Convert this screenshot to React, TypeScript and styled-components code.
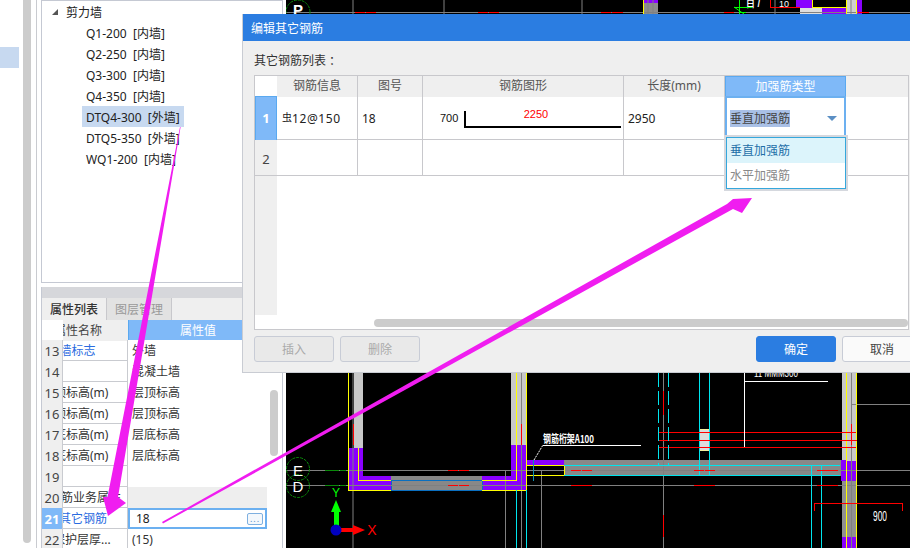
import styled, { createGlobalStyle } from "styled-components"

const GlobalStyle = createGlobalStyle`
  html, body { margin: 0; padding: 0; background: #fff; }
  * { box-sizing: border-box; }
  body { font-family: "Noto Sans", "Noto Sans CJK SC", sans-serif; font-size: 12px; color: #222; }
`

const treeItems = [
  "Q1-200 [内墙]",
  "Q2-250 [内墙]",
  "Q3-300 [内墙]",
  "Q4-350 [内墙]",
  "DTQ4-300 [外墙]",
  "DTQ5-350 [外墙]",
  "WQ1-200 [内墙]",
]

const props = [
  { no: 13, name: "内/外墙标志", value: "外墙", shift: -32, link: true },
  { no: 14, name: "", value: "混凝土墙", shift: 0 },
  { no: 15, name: "起点顶标高(m)", value: "层顶标高", shift: -33 },
  { no: 16, name: "终点顶标高(m)", value: "层顶标高", shift: -33 },
  { no: 17, name: "起点底标高(m)", value: "层底标高", shift: -33 },
  { no: 18, name: "终点底标高(m)", value: "层底标高", shift: -33 },
  { no: 19, name: "", value: "", shift: 0 },
  { no: 20, name: "钢筋业务属性", value: "", shift: -14, group: true },
  { no: 21, name: "其它钢筋", value: "18", shift: -4, link: true, active: true },
  { no: 22, name: "保护层厚...", value: "(15)", shift: -10 },
]

const Page = styled.div`
  position: relative;
  display: flex;
  width: 910px;
  height: 548px;
  overflow: hidden;
  background: #fff;
`

const LeftStrip = styled.div`
  width: 23px;
  padding-top: 47px;
`

const StripMark = styled.div`
  width: 19px;
  height: 21px;
  background: #c7d9f0;
`

const OuterScroll = styled.div`
  width: 8px;
  height: 543px;
  background: #cccccc;
  border-radius: 0 0 4px 4px;
`

const SideColumn = styled.div`
  display: flex;
  flex-direction: column;
  width: 250px;
  margin-left: 5px;
  padding-left: 4px;
  border-left: 1px solid #c9cbd0;
`

const TreePanel = styled.div`
  width: 242px;
  height: 283px;
  border: 1px solid #c5c9d3;
  flex-shrink: 0;
`

const TreeRoot = styled.div`
  display: flex;
  align-items: center;
  height: 21px;
  padding-left: 10px;
  font-size: 12px;
  gap: 8px;
`

const Triangle = styled.span`
  width: 0;
  height: 0;
  border-left: 6px solid transparent;
  border-bottom: 6px solid #555;
`

const TreeItem = styled.div<{ $selected?: boolean }>`
  display: flex;
  align-items: center;
  width: ${p => (p.$selected ? "102px" : "auto")};
  height: 21px;
  margin-left: 40px;
  padding-left: 4px;
  white-space: pre;
  background: ${p => (p.$selected ? "#c7d9f0" : "transparent")};
`

const PropsPanel = styled.div`
  display: flex;
  flex-direction: column;
  flex: 1;
  width: 242px;
  margin-top: 4px;
  border-left: 1px solid #c5c9d3;
  border-right: 1px solid #c5c9d3;
`

const GrayBar = styled.div`
  height: 11px;
  background: #d6d7db;
`

const Tabs = styled.div`
  display: flex;
  height: 22px;
  background: #efefef;
`

const Tab = styled.div<{ $active?: boolean }>`
  display: flex;
  align-items: center;
  justify-content: center;
  width: 65px;
  font-size: 12px;
  font-weight: ${p => (p.$active ? 500 : 400)};
  color: ${p => (p.$active ? "#333" : "#999")};
  background: ${p => (p.$active ? "#efefef" : "#e2e2e2")};
  border-right: 1px solid #c8c8cc;
`

const PropBody = styled.div`
  display: flex;
`

const PropTable = styled.div`
  width: 225px;
`

const PropHeader = styled.div`
  display: grid;
  grid-template-columns: 21px 65px 1fr;
  height: 20px;
`

const PropRow = styled.div`
  display: grid;
  grid-template-columns: 21px 65px 1fr;
  height: 21px;
  border-bottom: 1px solid #c9cbd0;
`

const CornerCell = styled.div`
  background: #fff;
`

const HeaderName = styled.div`
  line-height: 21px;
  text-indent: -9px;
  overflow: hidden;
  white-space: nowrap;
  color: #444;
  background: #efefef;
`

const HeaderValue = styled.div`
  text-align: center;
  line-height: 21px;
  color: #fff;
  background: #7fb9f8;
  border-left: 1px solid #5aa9f0;
`

const IndexCell = styled.div<{ $active?: boolean }>`
  text-align: center;
  line-height: 22px;
  font-size: 13px;
  font-weight: ${p => (p.$active ? 700 : 400)};
  color: ${p => (p.$active ? "#fff" : "#444")};
  background: ${p => (p.$active ? "#7fb9f8" : "#efefef")};
  border-right: 1px solid #c9cbd0;
`

const NameCell = styled.div<{ $link?: boolean; $shift: number }>`
  overflow: hidden;
  white-space: nowrap;
  line-height: 22px;
  text-indent: ${p => p.$shift}px;
  color: ${p => (p.$link ? "#2a6be0" : "#333")};
  border-right: 1px solid #c9cbd0;
`

const ValueCell = styled.div<{ $group?: boolean }>`
  padding-left: 4px;
  line-height: 22px;
  color: #333;
  background: ${p => (p.$group ? "#eeeeee" : "#fff")};
`

const EditCell = styled.div`
  display: flex;
  align-items: center;
  justify-content: space-between;
  height: 21px;
  padding: 0 2px 0 6px;
  border: 2px solid #6cb0f0;
`

const DotsButton = styled.div`
  display: flex;
  align-items: center;
  justify-content: center;
  width: 16px;
  height: 12px;
  border: 1px solid #7fb0e0;
  border-radius: 2px;
  font-size: 9px;
  line-height: 8px;
  letter-spacing: 1px;
  color: #5a90c8;
  background: #f4f8fc;
`

const PropScroll = styled.div`
  width: 8px;
  height: 66px;
  margin: 70px 0 0 3px;
  border-radius: 4px;
  background: #cccccc;
`

const CadArea = styled.div`
  flex: 1;
  height: 548px;
  background: #000;
`

const Dialog = styled.div`
  position: absolute;
  left: 242px;
  top: 14px;
  display: flex;
  flex-direction: column;
  width: 680px;
  height: 359px;
  background: #efefef;
  border-left: 1px solid #c9ccd3;
  border-bottom: 1px solid #c9ccd3;
`

const TitleBar = styled.div`
  display: flex;
  align-items: center;
  height: 27px;
  padding-left: 8px;
  font-size: 12px;
  color: #fff;
  background: #2b7de1;
  flex-shrink: 0;
`

const DialogLabel = styled.div`
  height: 34px;
  padding: 11px 0 0 11px;
  line-height: 17px;
  color: #333;
`

const RebarTable = styled.div`
  position: relative;
  display: flex;
  flex-direction: column;
  width: 655px;
  height: 255px;
  margin-left: 11px;
  background: #fff;
  border: 1px solid #c8c8cc;
`

const GridRow = styled.div<{ $height: number }>`
  display: grid;
  grid-template-columns: 22px 81px 65px 201px 101px 121px 1fr;
  height: ${p => p.$height}px;
  flex-shrink: 0;
  border-bottom: 1px solid #c8c8cc;
`

const HeadCell = styled.div`
  text-align: center;
  line-height: 20px;
  color: #555;
  background: #efefef;
  border-right: 1px solid #c8c8cc;
`

const HeadBlank = styled.div`
  background: #fff;
`

const HeadActive = styled.div`
  text-align: center;
  line-height: 19px;
  color: #fff;
  background: #7fb9f8;
  border: 1px solid #5aa9f0;
`

const HeadFill = styled.div`
  background: #efefef;
`

const RowNo = styled.div<{ $active?: boolean }>`
  display: flex;
  align-items: center;
  justify-content: center;
  padding-bottom: ${p => (p.$active ? 3 : 0)}px;
  padding-top: ${p => (p.$active ? 0 : 2)}px;
  font-size: 13px;
  font-weight: ${p => (p.$active ? 700 : 400)};
  color: ${p => (p.$active ? "#fff" : "#444")};
  background: ${p => (p.$active ? "#7fb9f8" : "#efefef")};
  border: ${p => (p.$active ? "1px solid #5aa9f0" : "0")};
`

const Cell = styled.div`
  display: flex;
  align-items: center;
  padding: 0 0 3px 4px;
  border-right: 1px solid #c8c8cc;
  color: #222;
`

const BarCell = styled(Cell)`
  padding-left: 5px;
  letter-spacing: 0.6px;
`

const BarGlyph = styled.span`
  position: relative;
  top: -2px;
  font-size: 10px;
  letter-spacing: 0;
`

const ShapeCell = styled.div`
  border-right: 1px solid #c8c8cc;
`

const SelectCell = styled.div`
  display: flex;
  align-items: center;
  justify-content: space-between;
  padding: 0 7px 4px 3px;
  border: 2px solid #6cb0f0;
  border-bottom: 0;
`

const SelectedText = styled.span`
  color: #444;
  background: #a9c0e6;
  line-height: 17px;
`

const Caret = styled.span`
  width: 0;
  height: 0;
  border-left: 5px solid transparent;
  border-right: 5px solid transparent;
  border-top: 5px solid #5b8fc4;
`

const EmptyCell = styled.div`
  border-right: 1px solid #c8c8cc;
`

const Filler = styled.div`
  display: flex;
  height: 139px;
  flex-shrink: 0;
`

const FillerIndex = styled.div`
  width: 22px;
  background: #efefef;
`

const HScroll = styled.div`
  height: 8px;
  margin: 4px 0 0 119px;
  border-radius: 4px;
  background: #cccccc;
`

const DropMenu = styled.div`
  position: absolute;
  left: 471px;
  top: 61px;
  width: 120px;
  height: 52px;
  background: #fff;
  border: 1px solid #35a7dc;
  box-shadow: 0 0 0 2px #d5d8de;
`

const DropOption = styled.div<{ $active?: boolean }>`
  height: 25px;
  padding-left: 3px;
  line-height: 25px;
  color: ${p => (p.$active ? "#1f6fa8" : "#888")};
  background: ${p => (p.$active ? "#dcf4fb" : "#fff")};
`

const ButtonRow = styled.div`
  display: flex;
  gap: 6px;
  padding: 6px 0 0 11px;
`

const GhostButton = styled.div`
  display: flex;
  align-items: center;
  justify-content: center;
  flex-shrink: 0;
  width: 80px;
  height: 26px;
  border: 1px solid #c8ccd6;
  border-radius: 3px;
  color: #aaa;
  background: #e9e9e9;
`

const Spacer = styled.div`
  flex-shrink: 0;
  width: 324px;
`

const PrimaryButton = styled(GhostButton)`
  border-color: #2b7de1;
  color: #fff;
  background: #2b7de1;
`

const PlainButton = styled(GhostButton)`
  color: #444;
  background: #fafafa;
`

const Overlay = styled.svg`
  position: absolute;
  left: 0;
  top: 0;
  pointer-events: none;
`

const CadSvg = styled.svg`
  display: block;
`

type L = [number, number, number, number]

const gray: L[] = [
  [286, 12.5, 910, 12.5], [353, 0, 353, 14], [444, 0, 444, 14], [582, 0, 582, 14], [775, 0, 775, 14],
  [648, 0, 648, 14], [653, 0, 653, 14], [851, 0, 851, 14],
  [286, 470.5, 910, 470.5], [286, 485.5, 910, 485.5],
  [353, 373, 353, 548], [505.5, 470, 505.5, 548], [521.5, 373, 521.5, 548], [541.5, 470, 541.5, 548],
  [663.5, 373, 663.5, 548], [851.5, 373, 851.5, 548], [852, 404.5, 910, 404.5],
]

const red: L[] = [
  [355, 12.5, 365, 12.5], [366, 12.5, 376, 12.5], [478, 12.5, 488, 12.5], [489, 12.5, 499, 12.5],
  [601, 12.5, 611, 12.5], [612, 12.5, 623, 12.5], [724, 12.5, 734, 12.5], [858, 12.5, 869, 12.5],
  [448, 470.5, 458, 470.5], [459, 470.5, 469, 470.5], [448, 485.5, 458, 485.5], [459, 485.5, 469, 485.5],
  [571, 470.5, 581, 470.5], [582, 470.5, 592, 470.5], [571, 485.5, 592, 485.5],
  [694, 470.5, 704, 470.5], [705, 470.5, 715, 470.5], [694, 485.5, 715, 485.5],
  [817, 470.5, 838, 470.5], [817, 485.5, 838, 485.5],
  [353.5, 424, 353.5, 445], [521.5, 424, 521.5, 445], [851.5, 424, 851.5, 445],
  [663.5, 391, 663.5, 415], [663.5, 515, 663.5, 537],
  [658, 432.5, 856, 432.5], [658, 440.5, 857, 440.5], [658, 447.5, 856, 447.5],
  [814.5, 503.5, 902, 503.5], [814.5, 503, 814.5, 511], [902.5, 503, 902.5, 511],
  [770.5, 0, 770.5, 7], [770, 7.5, 800, 7.5],
]

const yellow: L[] = [
  [348.5, 373, 348.5, 490.5], [348, 490.5, 391, 490.5], [358.5, 448, 358.5, 480.5], [358, 480.5, 391, 480.5],
  [516.5, 373, 516.5, 480.5], [482, 480.5, 517, 480.5], [526.5, 373, 526.5, 490.5], [482, 490.5, 527, 490.5],
  [527, 465.5, 564, 465.5], [527, 475.5, 564, 475.5], [564.5, 465, 564.5, 475],
  [846.5, 373, 846.5, 548], [856.5, 373, 856.5, 548],
  [643.5, 0, 643.5, 14], [812.5, 0, 812.5, 7], [812, 7.5, 846, 7.5], [846.5, 0, 846.5, 14], [856.5, 0, 856.5, 14],
]

const cyan: L[] = [
  [564, 465.5, 840, 465.5], [564, 475.5, 840, 475.5],
  [699.5, 373, 699.5, 475], [709.5, 373, 709.5, 475],
  [811.5, 465, 811.5, 548], [821.5, 465, 821.5, 548],
  [516.5, 490, 516.5, 548], [526.5, 490, 526.5, 548],
]

const fills: [number, number, number, number, string][] = [
  [354, 373, 9, 75, "#c8c8c8"],
  [349, 448, 14, 28, "#8a00ff"],
  [349, 476, 42, 14, "#8a00ff"],
  [391, 476, 91, 14, "#888888"],
  [482, 476, 35, 14, "#8a00ff"],
  [511, 373, 16, 72, "#c8c8c8"],
  [511, 445, 16, 45, "#8a00ff"],
  [527, 460, 37, 5, "#8a00ff"],
  [564, 460, 278, 16, "#888888"],
  [842, 373, 15, 88, "#c8c8c8"],
  [841, 460, 6, 21, "#8a00ff"],
  [847, 461, 10, 20, "#8a00ff"],
  [842, 481, 15, 56, "#909090"],
  [842, 537, 15, 11, "#8a00ff"],
  [643, 0, 15, 3, "#8a00ff"],
  [643, 3, 15, 11, "#8c8c8c"],
  [796, 0, 16, 8, "#8a00ff"],
  [800, 8, 22, 6, "#dddddd"],
  [822, 8, 24, 6, "#8a00ff"],
  [846, 0, 11, 14, "#d0d0d0"],
  [857, 0, 5, 14, "#8a00ff"],
  [699, 429, 11, 22, "#dddddd"],
]

function Lines({ data, color }: { data: L[]; color: string }) {
  return (
    <g stroke={color} strokeWidth="1">
      {data.map((l, i) => <line key={i} x1={l[0]} y1={l[1]} x2={l[2]} y2={l[3]} />)}
    </g>
  )
}

function CadDrawing() {
  return (
    <CadSvg width="624" height="548" viewBox="286 0 624 548">
      {fills.map((f, i) => <rect key={i} x={f[0]} y={f[1]} width={f[2]} height={f[3]} fill={f[4]} />)}
      <rect x="699.5" y="429.5" width="10" height="21" fill="none" stroke="#f5f0a0" />
      <rect x="391.5" y="480.5" width="91" height="10" fill="none" stroke="#0a6fc0" />
      <Lines data={gray} color="#808080" />
      <Lines data={yellow} color="#ffff00" />
      <Lines data={cyan} color="#00e5ee" />
      <Lines data={red} color="#ff0000" />
      <g stroke="#00e5ee" strokeDasharray="14 4">
        <line x1="658.5" y1="373" x2="658.5" y2="465" />
        <line x1="668.5" y1="373" x2="668.5" y2="465" />
      </g>
      <line x1="533.5" y1="460" x2="533.5" y2="481" stroke="#1090b0" />
      <g stroke="#ffffff">
        <line x1="744.5" y1="373" x2="744.5" y2="447" />
        <line x1="744" y1="381.5" x2="828" y2="381.5" />
        <line x1="543" y1="445.5" x2="641" y2="445.5" />
        <line x1="534" y1="460" x2="543" y2="445" strokeDasharray="2 1" />
      </g>
      <g stroke="#0a8a0a" strokeDasharray="14 1 7 0">
        <line x1="325" y1="470.5" x2="346" y2="470.5" />
        <line x1="325" y1="485.5" x2="346" y2="485.5" />
      </g>
      <g stroke="#0a8a0a" fill="none" strokeDasharray="3 1">
        <circle cx="298" cy="12" r="12" />
        <circle cx="298" cy="469" r="11.5" />
        <circle cx="298" cy="486" r="11.5" />
      </g>
      <g fill="#ffffff" fontFamily="'Liberation Sans', sans-serif">
        <text x="298" y="476" fontSize="15" textAnchor="middle">E</text>
        <text x="298" y="492" fontSize="15" textAnchor="middle">D</text>
        <text x="298" y="15" fontSize="15" fontWeight="700" textAnchor="middle">P</text>
        <text x="543" y="443" fontSize="11" textLength="51" lengthAdjust="spacingAndGlyphs" fontFamily="'Noto Sans CJK SC', sans-serif" fontWeight="700">钢筋桁架A100</text>
        <text x="873" y="521" fontSize="15" textLength="14" lengthAdjust="spacingAndGlyphs">900</text>
        <text x="754" y="377" fontSize="10" textLength="44" lengthAdjust="spacingAndGlyphs">11 MMM300</text>
        <text x="746" y="7" fontSize="9" fontWeight="700">日 /</text>
        <text x="779" y="7" fontSize="9">10</text>
      </g>
      <g stroke="#00ff00">
        <line x1="739.5" y1="0" x2="739.5" y2="14" />
        <line x1="734" y1="7.5" x2="752" y2="7.5" />
        <line x1="734" y1="7" x2="744" y2="14" />
        <line x1="739" y1="12.5" x2="746" y2="12.5" />
      </g>
      <rect x="334" y="508" width="5" height="18" fill="#00ff00" />
      <polygon points="336,500 331,512 341,512" fill="#00ff00" />
      <rect x="340" y="528" width="15" height="4" fill="#ff0000" />
      <polygon points="353,525 365,530 353,535" fill="#ff0000" />
      <circle cx="336" cy="530" r="5.5" fill="#0000c0" />
      <text x="336" y="497" fontSize="12" fill="#00ff00" textAnchor="middle" fontFamily="'Liberation Sans', sans-serif">Y</text>
      <text x="372" y="535" fontSize="14" fill="#ff0000" textAnchor="middle" fontFamily="'Liberation Sans', sans-serif">X</text>
    </CadSvg>
  )
}

export default function App() {
  return (
    <Page>
      <GlobalStyle />
      <LeftStrip><StripMark /></LeftStrip>
      <OuterScroll />
      <SideColumn>
        <TreePanel>
          <TreeRoot><Triangle />剪力墙</TreeRoot>
          {treeItems.map((t, i) => <TreeItem key={t} $selected={i === 4}>{t.replace(" ", "  ")}</TreeItem>)}
        </TreePanel>
        <PropsPanel>
          <GrayBar />
          <Tabs>
            <Tab $active>属性列表</Tab>
            <Tab>图层管理</Tab>
          </Tabs>
          <PropBody>
            <PropTable>
              <PropHeader>
                <CornerCell />
                <HeaderName>属性名称</HeaderName>
                <HeaderValue>属性值</HeaderValue>
              </PropHeader>
              {props.map(r => (
                <PropRow key={r.no}>
                  <IndexCell $active={r.active}>{r.no}</IndexCell>
                  <NameCell $link={r.link} $shift={r.shift}>{r.name}</NameCell>
                  {r.active
                    ? <EditCell>{r.value}<DotsButton>...</DotsButton></EditCell>
                    : <ValueCell $group={r.group}>{r.value}</ValueCell>}
                </PropRow>
              ))}
            </PropTable>
            <PropScroll />
          </PropBody>
        </PropsPanel>
      </SideColumn>
      <CadArea><CadDrawing /></CadArea>

      <Dialog>
        <TitleBar>编辑其它钢筋</TitleBar>
        <DialogLabel>其它钢筋列表 ：</DialogLabel>
        <RebarTable>
          <GridRow $height={20}>
            <HeadBlank />
            <HeadCell>钢筋信息</HeadCell>
            <HeadCell>图号</HeadCell>
            <HeadCell>钢筋图形</HeadCell>
            <HeadCell>长度(mm)</HeadCell>
            <HeadActive>加强筋类型</HeadActive>
            <HeadFill />
          </GridRow>
          <GridRow $height={44}>
            <RowNo $active>1</RowNo>
            <BarCell><BarGlyph>虫</BarGlyph>12@150</BarCell>
            <Cell>18</Cell>
            <ShapeCell>
              <svg width="200" height="43">
                <text x="17" y="26" fontSize="11" fill="#111" fontFamily="'Liberation Sans', sans-serif">700</text>
                <text x="113" y="22" fontSize="11" fill="#ff0000" textAnchor="middle" fontFamily="'Liberation Sans', sans-serif">2250</text>
                <path d="M42 15V31H198" fill="none" stroke="#000" strokeWidth="2" />
              </svg>
            </ShapeCell>
            <Cell>2950</Cell>
            <SelectCell>
              <SelectedText>垂直加强筋</SelectedText>
              <Caret />
            </SelectCell>
            <div />
          </GridRow>
          <GridRow $height={36}>
            <RowNo>2</RowNo>
            <EmptyCell />
            <EmptyCell />
            <EmptyCell />
            <EmptyCell />
            <div />
            <div />
          </GridRow>
          <Filler><FillerIndex /></Filler>
          <HScroll />
          <DropMenu>
            <DropOption $active>垂直加强筋</DropOption>
            <DropOption>水平加强筋</DropOption>
          </DropMenu>
        </RebarTable>
        <ButtonRow>
          <GhostButton>插入</GhostButton>
          <GhostButton>删除</GhostButton>
          <Spacer />
          <PrimaryButton>确定</PrimaryButton>
          <PlainButton>取消</PlainButton>
        </ButtonRow>
      </Dialog>

      <Overlay width="910" height="548" viewBox="0 0 910 548">
        <polygon
          points="180,127 180.6,127 118,497 126,503 108,516 103,497 107.5,497"
          fill="#f01df0"
        />
        <polygon
          points="162,522 163,523.5 733,209 742,213 752,198 733,199 727,204"
          fill="#f01df0"
        />
      </Overlay>
    </Page>
  )
}
